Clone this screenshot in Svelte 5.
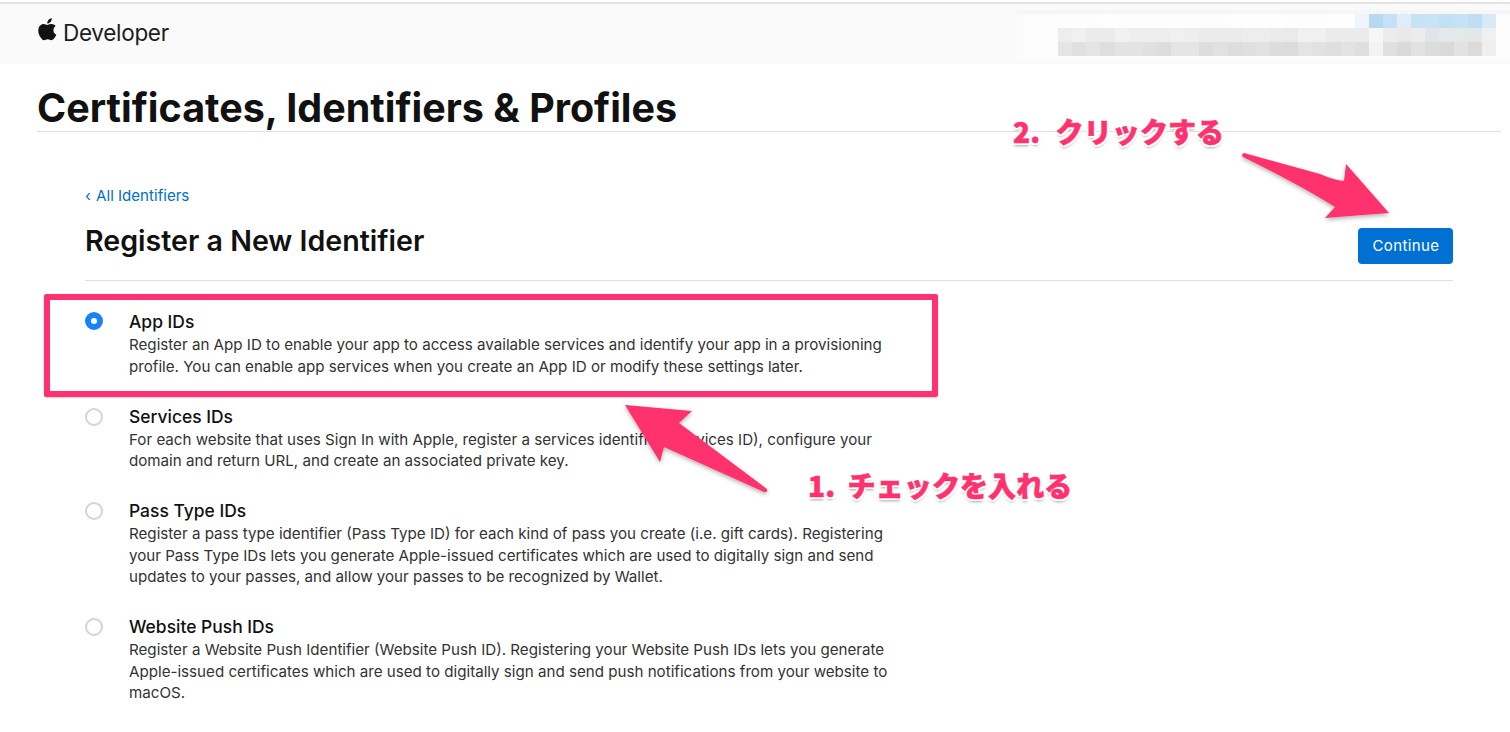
<script>
  const rows = [
    { cls: 'r1', cells: ['#fdfdfd','#fdfdfd','#fdfdfd','#fefefe','#fdfdfd','#fdfdfd','#fdfdfd','#fdfdfd','#fdfdfd','#fdfdfd','#fdfdfd','#fdfdfd','#fefefe','#fefefe','#fefefe','#fefefe','#fdfdfd','#fdfdfd','#fdfdfd','#fefefe','#fefefe','#eef6fb','#b7d8f0','#c6e1f5','#deedf8','#c8e2f5','#c8e3f6','#c3e1f6','#c6e2f6','#bfdef4','#d9eaf6'] },
    { cls: 'r2', cells: ['#ededed','#f0f0f0','#ebebeb','#ebebeb','#f1f1f1','#eeeeee','#eeeeee','#eeeeee','#f0f0f0','#eeeeee','#ebebeb','#ebebeb','#ebebeb','#ededed','#ededed','#ebebeb','#eaeaea','#f0f0f0','#f0f0f0','#ebebeb','#ebebeb','#ebebeb','#f5f6f7','#ebecec','#e9e9e9','#ececed','#e2e5e7','#e5e8ea','#e5e8e9','#e4e7e7','#eef0f2'] },
    { cls: 'r3', cells: ['#e5e5e5','#e0e0e0','#e4e4e4','#dedede','#e3e3e3','#e3e3e3','#e0e0e0','#dddddd','#e5e5e5','#e5e5e5','#dddddd','#e1e1e1','#dddddd','#dfdfdf','#e2e2e2','#dcdcdc','#dbdbdb','#e4e4e4','#e1e1e1','#dedede','#e3e3e3','#dfdfdf','#f3f3f3','#e0e0e0','#dadada','#e2e2e2','#dcdcdc','#dadada','#e2e2e2','#dcdbd9','#efefee'] }
  ];
  const items = [
    { title: 'App IDs', on: true, lines: ['Register an App ID to enable your app to access available services and identify your app in a provisioning', 'profile. You can enable app services when you create an App ID or modify these settings later.'] },
    { title: 'Services IDs', on: false, lines: ['For each website that uses Sign In with Apple, register a services identifier (Services ID), configure your', 'domain and return URL, and create an associated private key.'] },
    { title: 'Pass Type IDs', on: false, lines: ['Register a pass type identifier (Pass Type ID) for each kind of pass you create (i.e. gift cards). Registering', 'your Pass Type IDs lets you generate Apple-issued certificates which are used to digitally sign and send', 'updates to your passes, and allow your passes to be recognized by Wallet.'] },
    { title: 'Website Push IDs', on: false, lines: ['Register a Website Push Identifier (Website Push ID). Registering your Website Push IDs lets you generate', 'Apple-issued certificates which are used to digitally sign and send push notifications from your website to', 'macOS.'] }
  ];
</script>

<div class="page">
  <header class="topbar">
    <div class="brand">
      <svg class="apple" viewBox="0 0 16 19.5" width="19" height="23" aria-hidden="true">
        <path d="M11.6 0.2c.1 1.2-.4 2.3-1 3.1-.7.8-1.7 1.4-2.8 1.3-.1-1.1.4-2.3 1-3C9.500.8 10.600.3 11.600.2zM15 6.800c-.1.100-2 1.200-2 3.500 0 2.700 2.400 3.700 2.500 3.700 0 .100-.4 1.300-1.300 2.600-.8 1.100-1.600 2.200-2.900 2.200s-1.600-.7-3.100-.7c-1.400 0-1.900.8-3.100.8s-2-1.100-2.900-2.400C1 15 .2 12.700.2 10.500c0-3.500 2.300-5.400 4.500-5.400 1.200 0 2.200.8 3 .8.700 0 1.800-.8 3.200-.8.500 0 2.500 0 4.100 1.700z" fill="#111"/>
      </svg>
      <span>Developer</span>
    </div>
    <div class="mosaic" aria-hidden="true">
      {#each rows as row}
        <div class="mrow {row.cls}">
          {#each row.cells as c}<i style="background:{c}"></i>{/each}
        </div>
      {/each}
    </div>
  </header>

  <main>
    <h1>Certificates, Identifiers &amp; Profiles</h1>
    <section class="content">
      <a class="back" href="#top"><span class="chev">‹</span> All Identifiers</a>
      <div class="head">
        <h2>Register a New Identifier</h2>
        <button type="button">Continue</button>
      </div>
      <div class="list">
        {#each items as item}
          <div class="item">
            <span class="radio" class:on={item.on}></span>
            <div class="body">
              <h3>{item.title}</h3>
              {#each item.lines as l}<p>{l}</p>{/each}
            </div>
          </div>
        {/each}
      </div>
    </section>
  </main>

  <div class="box"></div>
  <svg class="arrows" width="1510" height="732" viewBox="0 0 1510 732" aria-hidden="true">
    <defs>
      <filter id="sh" x="-20%" y="-20%" width="140%" height="140%">
        <feDropShadow dx="0" dy="2" stdDeviation="2" flood-color="#000" flood-opacity="0.3"/>
      </filter>
    </defs>
    <g fill="#ff316e" filter="url(#sh)">
      <path d="M625 405L692 411L679 423L767 489Q768 493 764 492L664 447L660 462Z"/>
      <path d="M1244 153L1320 174Q1334 180 1344 181L1346 164L1389 213L1325 218L1335 207Q1300 185 1243 157Q1241 154 1244 153Z"/>
    </g>
  </svg>
  <div class="note n1">1. チェックを入れる</div>
  <div class="note n2">2. クリックする</div>
</div>

<style>
  :global(body) { margin: 0; background: #fff; }
  .page {
    position: relative;
    width: 1510px;
    height: 732px;
    overflow: hidden;
    font-family: Inter, "Liberation Sans", sans-serif;
    color: #111;
  }
  .topbar {
    margin-top: 2px;
    height: 60px;
    border-top: 2px solid #e3e3e3;
    background: #fafafa;
    display: flex;
    justify-content: space-between;
    align-items: flex-start;
  }
  .brand {
    display: flex;
    align-items: center;
    gap: 6px;
    margin: 13px 0 0 38px;
    font-size: 22.5px;
    letter-spacing: -0.3px;
    color: #1d1d1f;
    height: 30px;
  }
  .apple { margin-top: -5px; }
  .mosaic {
    margin-top: 6px;
    width: 438px;
    padding: 0 14px 4px 41px;
    border-top: 4px solid #f6f6f6;
    background: #fcfcfc;
    display: flex;
    flex-direction: column;
  }
  .mrow { display: flex; height: 14px; }
  .mrow i { flex: 1; display: block; }
  main { padding-left: 37px; }
  h1 {
    margin: 0;
    width: 1464px;
    height: 68px;
    box-sizing: border-box;
    padding-top: 21px;
    border-bottom: 1px solid #e0e0e0;
    font-size: 39.500px;
    line-height: 47px;
    font-weight: 700;
    color: #111;
  }
  .content { width: 1368px; margin-left: 48px; padding-top: 54px; }
  .back {
    display: block;
    font-size: 15.100px;
    line-height: 20px;
    color: #0070c9;
    text-decoration: none;
  }
  .chev { margin-right: 1px; }
  .head {
    display: flex;
    justify-content: space-between;
    align-items: flex-start;
    height: 65px;
    border-bottom: 1px solid #e0e0e0;
    margin-top: 9px;
  }
  h2 { margin: 8px 0 0; font-size: 28.600px; line-height: 36px; font-weight: 600; color: #111; }
  button {
    margin-top: 13px;
    width: 95px;
    height: 36px;
    padding: 0 0 2px 1px;
    border: 0;
    border-radius: 4px;
    background: #0070d2;
    color: #fff;
    font: 400 15px Inter, sans-serif;
    letter-spacing: 0.4px;
  }
  .list { display: flex; flex-direction: column; gap: 28.500px; padding-top: 30px; }
  .item { display: flex; gap: 26px; }
  .radio {
    width: 18px;
    height: 18px;
    box-sizing: border-box;
    border-radius: 50%;
    border: 2px solid #d4d4d4;
    background: #fff;
    margin-top: 2px;
    flex: none;
  }
  .radio.on { border: 6px solid #1a82f7; margin-top: 1px; }
  .body { display: flex; flex-direction: column; }
  h3 { margin: 0 0 1px; font-size: 17.450px; line-height: 22px; font-weight: 500; color: #111; }
  p { margin: 0; font-size: 15.150px; line-height: 21.500px; color: #333; white-space: nowrap; }
  .box {
    position: absolute;
    left: 44px;
    top: 294px;
    width: 894px;
    height: 103px;
    box-sizing: border-box;
    border: 6px solid #ff316e;
    border-radius: 2px;
    box-shadow: 0 1px 2px rgba(0,0,0,.2);
  }
  .arrows { position: absolute; left: 0; top: 0; pointer-events: none; }
  .note {
    position: absolute;
    font-family: "Noto Sans CJK JP", sans-serif;
    font-weight: 900;
    font-size: 28px;
    line-height: 40px;
    color: #ff316e;
    white-space: nowrap;
    -webkit-text-stroke: 0.6px #ff316e;
    text-shadow:
      2px 0 #fff, -2px 0 #fff, 0 2px #fff, 0 -2px #fff,
      1.500px 1.500px #fff, -1.500px 1.500px #fff, 1.500px -1.500px #fff, -1.500px -1.500px #fff,
      0 3px 3px rgba(0,0,0,.35);
  }
  .n1 { left: 808px; top: 465px; word-spacing: 6px; letter-spacing: 0.1px; }
  .n2 { left: 1013px; top: 111px; word-spacing: 9px; letter-spacing: 0.1px; }
</style>
